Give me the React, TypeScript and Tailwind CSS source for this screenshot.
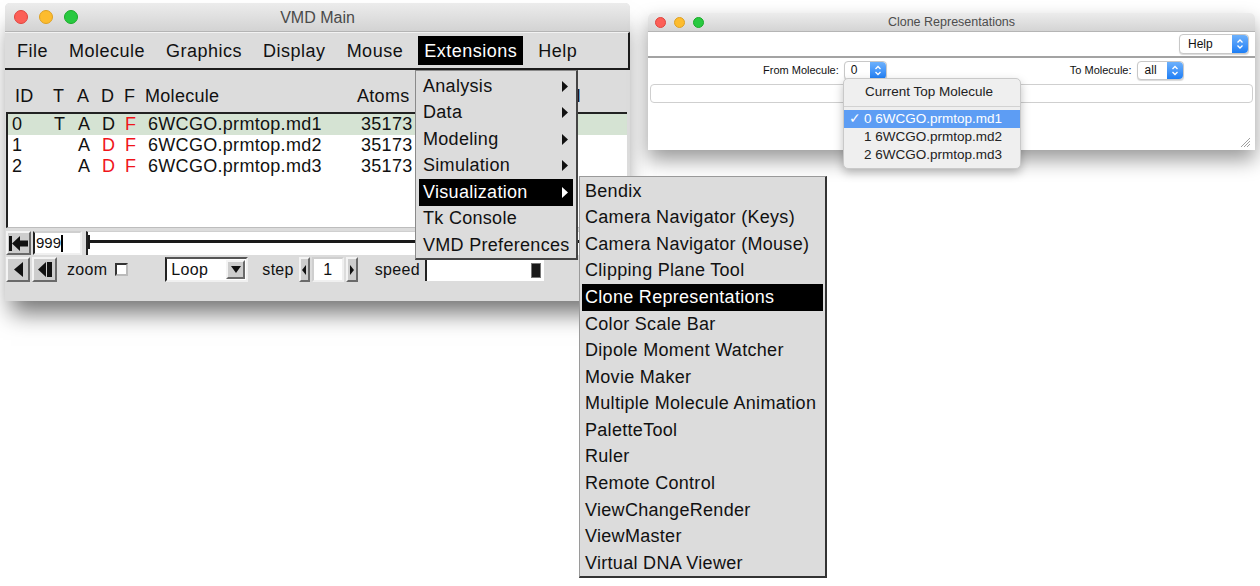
import React from "react";

const tkRaised =
  "border-2 border-t-[#f4f4f4] border-l-[#f4f4f4] border-b-[#6a6a6a] border-r-[#6a6a6a]";
const tkSunken =
  "border-2 border-t-[#555] border-l-[#222] border-b-[#f0f0f0] border-r-[#f0f0f0]";

function Lights({ big }: { big?: boolean }) {
  const d = big ? "w-[14px] h-[14px]" : "w-[11px] h-[11px]";
  const gap = big ? "gap-[11px]" : "gap-[8px]";
  return (
    <div className={`flex items-center ${gap}`}>
      <span className={`${d} rounded-full bg-[#fc5f57] border border-[#e0443e]`} />
      <span className={`${d} rounded-full bg-[#fdbc2e] border border-[#dea123]`} />
      <span className={`${d} rounded-full bg-[#28c940] border border-[#1aab29]`} />
    </div>
  );
}

function Tri({ dir, color = "#111", w = 7, h = 11 }: { dir: "l" | "r" | "d"; color?: string; w?: number; h?: number }) {
  const pts = dir === "r" ? `0,0 ${w},${h / 2} 0,${h}` : dir === "l" ? `${w},0 0,${h / 2} ${w},${h}` : `0,0 ${w},0 ${w / 2},${h}`;
  return (
    <svg width={w} height={h} viewBox={`0 0 ${w} ${h}`}>
      <polygon points={pts} fill={color} />
    </svg>
  );
}

function Stepper({ h = 19 }: { h?: number }) {
  return (
    <div className="w-[16px] self-stretch rounded-r-[4px] bg-linear-to-b from-[#6cb0fb] to-[#1b7ef5] flex items-center justify-center">
      <svg width="8" height={h - 6} viewBox="0 0 8 13">
        <polyline points="1.5,5 4,2.5 6.5,5" fill="none" stroke="white" strokeWidth="1.3" />
        <polyline points="1.5,8 4,10.5 6.5,8" fill="none" stroke="white" strokeWidth="1.3" />
      </svg>
    </div>
  );
}

const molecules = [
  { id: "0", t: true, name: "6WCGO.prmtop.md1", top: true },
  { id: "1", t: false, name: "6WCGO.prmtop.md2", top: false },
  { id: "2", t: false, name: "6WCGO.prmtop.md3", top: false },
];

const extItems = ["Analysis", "Data", "Modeling", "Simulation", "Visualization", "Tk Console", "VMD Preferences"];
const subItems = [
  "Bendix",
  "Camera Navigator (Keys)",
  "Camera Navigator (Mouse)",
  "Clipping Plane Tool",
  "Clone Representations",
  "Color Scale Bar",
  "Dipole Moment Watcher",
  "Movie Maker",
  "Multiple Molecule Animation",
  "PaletteTool",
  "Ruler",
  "Remote Control",
  "ViewChangeRender",
  "ViewMaster",
  "Virtual DNA Viewer",
];

function VmdMain() {
  const menus = ["File", "Molecule", "Graphics", "Display", "Mouse", "Extensions", "Help"];
  return (
    <div className="absolute left-[5px] top-[3px] w-[625px] h-[298px] bg-[#dcdcdc] rounded-t-[5px] shadow-[0_18px_22px_-6px_rgba(0,0,0,0.55)] flex flex-col text-[#111] tracking-[0.3px]">
      {/* title bar */}
      <div className="relative h-[29px] rounded-t-[5px] bg-linear-to-b from-[#ececec] to-[#d3d3d3] border-b border-[#b4b4b4] flex items-center pl-[9px]">
        <Lights big />
        <div className="absolute inset-0 pt-[2px] flex items-center justify-center text-[16px] text-[#4a4a4a] tracking-normal">
          VMD Main
        </div>
      </div>
      {/* menu bar */}
      <div className="h-[38px] border-t border-[#f2f2f2] border-b-2 border-b-[#1c1c1c] border-r-2 border-r-[#1c1c1c] flex items-center pl-[6px] gap-[9px] text-[18px] tracking-[0.5px]">
        {menus.map((m) => (
          <span
            key={m}
            className={
              m === "Extensions"
                ? "h-[29px] px-[6px] pt-[2px] flex items-center bg-black text-white"
                : "h-[29px] px-[6px] pt-[2px] flex items-center"
            }
          >
            {m}
          </span>
        ))}
      </div>
      {/* header */}
      <div className="h-[42px] pt-[16px] flex text-[18px] leading-[21px]">
        <span className="w-[48px] pl-[10px]">ID</span>
        <span className="w-[24px]">T</span>
        <span className="w-[24px]">A</span>
        <span className="w-[23px]">D</span>
        <span className="w-[21px]">F</span>
        <span className="w-[212px]">Molecule</span>
        <span className="w-[198px]">Atoms</span>
        <span>Vol</span>
      </div>
      {/* list */}
      <div className="ml-[1px] mr-[3px] h-[116px] bg-white border-l-2 border-t-2 border-[#222] border-b border-b-[#bdbdbd] text-[18px] leading-[21px]">
        {molecules.map((r) => (
          <div key={r.id} className={r.top ? "h-[21px] flex bg-[#d5e3d3]" : "h-[21px] flex"}>
            <span className="w-[46px] pl-[4px]">{r.id}</span>
            <span className="w-[24px]">{r.t ? "T" : ""}</span>
            <span className="w-[24px]">A</span>
            <span className={r.top ? "w-[23px]" : "w-[23px] text-[#f0141a]"}>D</span>
            <span className="w-[23px] text-[#f0141a]">F</span>
            <span className="w-[213px]">{r.name}</span>
            <span>35173</span>
          </div>
        ))}
      </div>
      {/* frame row */}
      <div className="mt-[3px] ml-[1px] mr-[3px] h-[24px] flex gap-[2px]">
        <div className={`w-[25px] bg-[#cdcdcd] ${tkRaised} flex items-center justify-center`}>
          <svg width="19" height="15" viewBox="0 0 19 15">
            <rect x="0" y="0" width="3" height="15" fill="#111" />
            <polygon points="3,7.5 11,0 11,4.5 19,4.5 19,10.5 11,10.5 11,15" fill="#111" />
          </svg>
        </div>
        <div className="w-[49px] bg-white border-2 border-l-[#222] border-t-[#cfcfcf] border-r-[#f0f0f0] border-b-[#f0f0f0] flex items-center pl-[1px] text-[15px] tracking-normal">
          999<span className="w-[2px] h-[17px] bg-black" />
        </div>
        <div className="relative ml-[2px] flex-1 bg-white border-l-2 border-[#222] border-t border-t-[#cfcfcf]">
          <div className="absolute left-0 right-0 top-[8px] h-[3px] bg-[#1a1a1a]" />
          <div className="absolute left-0 top-[3px] w-[2px] h-[14px] bg-[#1a1a1a]" />
        </div>
      </div>
      {/* animation row */}
      <div className="mt-[2px] ml-[1px] h-[25px] flex items-stretch text-[16px]">
        <div className={`w-[24px] bg-[#cdcdcd] ${tkRaised} flex items-center justify-center`}>
          <Tri dir="l" w={9} h={15} />
        </div>
        <div className={`ml-[2px] w-[25px] bg-[#cdcdcd] ${tkRaised} flex items-center justify-center`}>
          <Tri dir="l" w={8} h={15} />
          <span className="ml-[1px] w-[5px] h-[15px] bg-[#111]" />
        </div>
        <span className="ml-[10px] flex items-center">zoom</span>
        <span className="ml-[8px] self-center w-[13px] h-[13px] bg-white border-2 border-t-[#333] border-l-[#333] border-b-[#bbb] border-r-[#bbb]" />
        <div className={`ml-[37px] w-[83px] bg-white ${tkSunken} flex items-center`}>
          <span className="pl-[4px] flex-1">Loop</span>
          <div className={`w-[19px] h-[19px] mr-[1px] bg-[#cdcdcd] ${tkRaised} flex items-center justify-center`}>
            <Tri dir="d" w={10} h={7} />
          </div>
        </div>
        <span className="ml-[14px] flex items-center">step</span>
        <div className={`ml-[5px] w-[11px] bg-[#cdcdcd] ${tkRaised} flex items-center justify-center`}>
          <Tri dir="l" w={4} h={10} />
        </div>
        <div className="ml-[2px] w-[32px] bg-white border-2 border-t-[#cfcfcf] border-l-[#cfcfcf] border-b-[#f0f0f0] border-r-[#f0f0f0] flex items-center justify-center">
          1
        </div>
        <div className={`ml-[2px] w-[12px] bg-[#cdcdcd] ${tkRaised} flex items-center justify-center`}>
          <Tri dir="r" w={4} h={10} />
        </div>
        <span className="ml-[17px] flex items-center">speed</span>
        <div className="ml-[5px] w-[119px] my-[1px] bg-white border-l-2 border-[#222] border-t border-t-[#cfcfcf] flex items-center justify-end pr-[3px]">
          <span className="w-[10px] h-[15px] bg-[#1a1a1a] border border-[#777]" />
        </div>
      </div>
    </div>
  );
}

function ExtMenu() {
  return (
    <div className="absolute left-[415px] top-[70px] w-[163px] h-[190px] bg-[#dcdcdc] border border-[#8a8a8a] border-r-2 border-r-[#444] border-b-2 border-b-[#444] pt-[2px] text-[18px] text-[#111] tracking-[0.3px]">
      {extItems.map((it) => {
        const hi = it === "Visualization";
        return (
          <div
            key={it}
            className={
              hi
                ? "mx-[3px] h-[26.5px] pl-[4px] pr-[5px] flex items-center justify-between whitespace-nowrap bg-black text-white"
                : "mx-[3px] h-[26.5px] pl-[4px] pr-[5px] flex items-center justify-between whitespace-nowrap"
            }
          >
            <span>{it}</span>
            {["Analysis", "Data", "Modeling", "Simulation", "Visualization"].includes(it) && (
              <Tri dir="r" w={6} h={11} color={hi ? "#fff" : "#111"} />
            )}
          </div>
        );
      })}
    </div>
  );
}

function SubMenu() {
  return (
    <div className="absolute left-[579px] top-[176px] w-[248px] h-[402px] bg-[#dcdcdc] border border-[#9a9a9a] border-r-2 border-r-[#333] border-b-2 border-b-[#333] pt-[1px] text-[18px] text-[#111] tracking-[0.3px]">
      {subItems.map((it) => (
        <div
          key={it}
          className={
            it === "Clone Representations"
              ? "mx-[2px] h-[26.57px] pl-[3px] flex items-center whitespace-nowrap bg-black text-white"
              : "mx-[2px] h-[26.57px] pl-[3px] flex items-center whitespace-nowrap"
          }
        >
          {it}
        </div>
      ))}
    </div>
  );
}

function CloneWindow() {
  return (
    <div className="absolute left-[648px] top-[13px] w-[607px] h-[137px] bg-white rounded-t-[5px] shadow-[0_10px_20px_rgba(0,0,0,0.4)] flex flex-col text-[#111]">
      <div className="relative h-[19px] rounded-t-[5px] bg-linear-to-b from-[#ececec] to-[#d4d4d4] border-b border-[#b5b5b5] flex items-center pl-[7px]">
        <Lights />
        <div className="absolute inset-0 flex items-center justify-center text-[12.5px] text-[#4d4d4d]">
          Clone Representations
        </div>
      </div>
      <div className="h-[26px] flex items-center justify-end pr-[6px] border-b-2 border-[#a3a3a3]">
        <div className="h-[20px] w-[70px] rounded-[4px] border border-[#c8c8c8] bg-white flex shadow-[0_1px_1px_rgba(0,0,0,0.15)]">
          <span className="flex-1 pl-[8px] text-[12px] flex items-center">Help</span>
          <Stepper h={20} />
        </div>
      </div>
      <div className="h-[24px] flex items-center text-[11px]">
        <span className="ml-[115px]">From Molecule:</span>
        <div className="ml-[5px] h-[19px] w-[43px] rounded-[4px] border border-[#c8c8c8] bg-white flex shadow-[0_1px_1px_rgba(0,0,0,0.15)]">
          <span className="flex-1 pl-[6px] text-[12px] flex items-center">0</span>
          <Stepper />
        </div>
        <span className="ml-[183px]">To Molecule:</span>
        <div className="ml-[5px] h-[19px] w-[47px] rounded-[4px] border border-[#c8c8c8] bg-white flex shadow-[0_1px_1px_rgba(0,0,0,0.15)]">
          <span className="flex-1 pl-[7px] text-[12px] flex items-center">all</span>
          <Stepper />
        </div>
      </div>
      <div className="mt-[2px] mx-[2px] h-[19px] rounded-[4px] border border-[#cfcfcf] bg-white" />
      <div className="flex-1 flex items-end justify-end pr-[4px] pb-[2px]">
        <svg width="11" height="11" viewBox="0 0 11 11">
          <line x1="1" y1="10" x2="10" y2="1" stroke="#a0a0a0" />
          <line x1="4" y1="10" x2="10" y2="4" stroke="#a0a0a0" />
          <line x1="7" y1="10" x2="10" y2="7" stroke="#a0a0a0" />
        </svg>
      </div>
    </div>
  );
}

function Popup() {
  const rows = ["0 6WCGO.prmtop.md1", "1 6WCGO.prmtop.md2", "2 6WCGO.prmtop.md3"];
  return (
    <div className="absolute left-[843px] top-[78px] w-[178px] h-[91px] rounded-[5px] bg-[#efefef] border border-[#c9c9c9] shadow-[0_4px_10px_rgba(0,0,0,0.25)] pt-[2px] text-[13.5px] text-[#222]">
      <div className="h-[22px] pl-[21px] flex items-center">Current Top Molecule</div>
      <div className="my-[3px] h-px bg-[#d2d2d2]" />
      {rows.map((r, i) => (
        <div
          key={r}
          className={
            i === 0
              ? "h-[18px] flex items-center bg-[#5d9df4] text-white"
              : "h-[18px] flex items-center"
          }
        >
          <span className="w-[20px] pl-[5px]">{i === 0 ? "✓" : ""}</span>
          <span>{r}</span>
        </div>
      ))}
    </div>
  );
}

export default function App() {
  return (
    <div className="relative w-[1260px] h-[586px] overflow-hidden bg-white font-['Liberation_Sans',Arial,sans-serif]">
      <VmdMain />
      <CloneWindow />
      <Popup />
      <ExtMenu />
      <SubMenu />
    </div>
  );
}
